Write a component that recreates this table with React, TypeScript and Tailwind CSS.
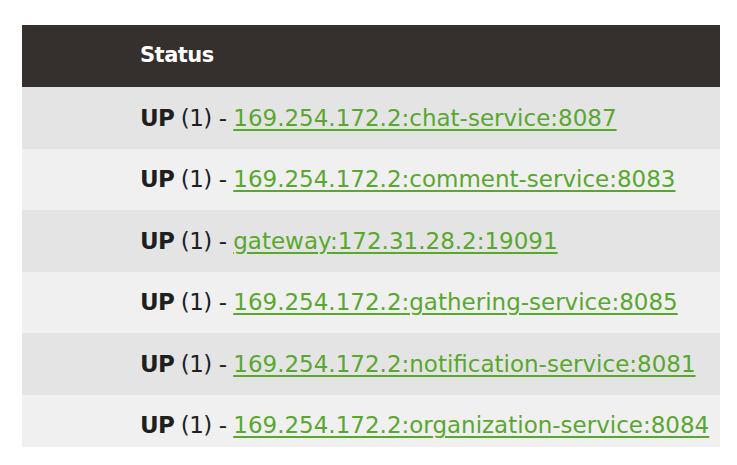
const rows = [
  "169.254.172.2:chat-service:8087",
  "169.254.172.2:comment-service:8083",
  "gateway:172.31.28.2:19091",
  "169.254.172.2:gathering-service:8085",
  "169.254.172.2:notification-service:8081",
  "169.254.172.2:organization-service:8084",
];

export default function App() {
  return (
    <div className="min-h-[465px] w-[737px] bg-white pt-[25px] pl-[22px] font-['DejaVu_Sans',sans-serif]">
      <div className="h-[422px] w-[698px] overflow-hidden">
        <div className="flex h-[62px] items-center bg-[#35302d] pl-[118px] text-[21px] font-bold tracking-[-0.5px] text-white">
          Status
        </div>
        {rows.map((r, i) => (
          <div
            key={r}
            className={
              "flex h-[61.5px] items-center pl-[118px] text-[23px] text-[#1f1f1f] " +
              (i % 2 === 0 ? "bg-[#e4e4e4]" : "bg-[#f0f0f0]")
            }
          >
            <span className="font-bold tracking-[-0.8px]">UP</span>
            <span className="whitespace-pre tracking-[-0.5px]"> (1) - </span>
            <a href="#" className="text-[#5aa72f] underline underline-offset-[3px]">
              {r}
            </a>
          </div>
        ))}
      </div>
    </div>
  );
}
